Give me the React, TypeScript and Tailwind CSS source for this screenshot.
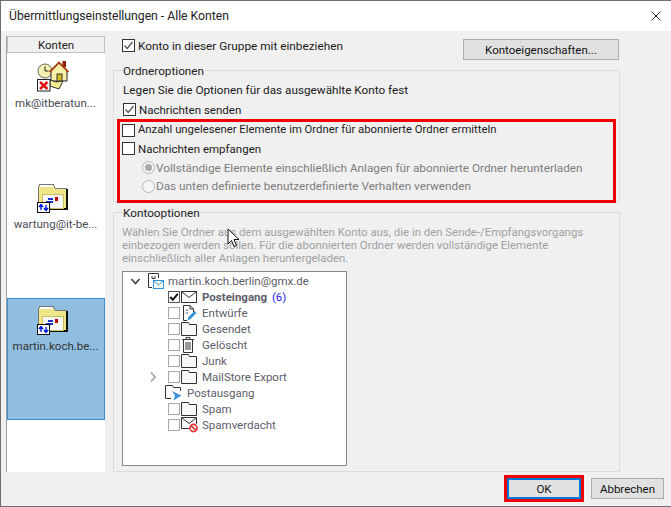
import React from "react";

const font = { fontFamily: 'Roboto, sans-serif' };

function Check({ on }: { on?: boolean }) {
  return (
    <span className="flex h-[13px] w-[13px] shrink-0 items-center justify-center border border-[#333] bg-white">
      {on && (
        <svg width="11" height="11" viewBox="0 0 11 11"><path d="M1.5 5.5 L4.2 8.5 L9.5 2" fill="none" stroke="#555" strokeWidth="1.3" /></svg>
      )}
    </span>
  );
}

function TreeCheck({ on }: { on?: boolean }) {
  return (
    <span className={`flex h-[12px] w-[12px] shrink-0 items-center justify-center border bg-white ${on ? "border-[#555]" : "border-[#a8a8a8]"}`}>
      {on && (
        <svg width="10" height="10" viewBox="0 0 10 10"><path d="M1.2 5 L3.8 7.8 L8.8 1.8" fill="none" stroke="#111" strokeWidth="2" /></svg>
      )}
    </span>
  );
}

function Row({ on, children, className = "" }: { on?: boolean; children: React.ReactNode; className?: string }) {
  return (
    <div className={`flex h-[19px] items-center gap-[3px] ${className}`}>
      <Check on={on} />
      <span>{children}</span>
    </div>
  );
}

function Radio({ on, children }: { on?: boolean; children: React.ReactNode }) {
  return (
    <div className="flex h-[18.67px] items-center gap-[1px] pl-[20px] text-[11.75px] text-[#7d7d7d]">
      <span className="flex h-[13px] w-[13px] shrink-0 items-center justify-center rounded-full border border-[#b8b8b8] bg-[#f6f6f6]">
        {on && <span className="h-[7px] w-[7px] rounded-full bg-[#a8a8a8]" />}
      </span>
      <span>{children}</span>
    </div>
  );
}

function FolderMail() {
  return (
    <svg width="31" height="30" viewBox="0 0 31 30" shapeRendering="crispEdges">
      <path d="M1 5 L3 1 H16 L18 5 H29 V26 H1 Z" fill="#efe68a" stroke="#777" />
      <path d="M3 2 H16 V4 H3 Z" fill="#fff" />
      <path d="M29 6 H31 V27 H3 V25 H29 Z" fill="#111" />
      <rect x="5" y="11" width="21" height="14" fill="#f7f7f7" stroke="#c9bf5a" />
      <rect x="18" y="14" width="3" height="4" fill="#c00000" />
      <path d="M11 16 H16 M9 19 H16" stroke="#1f33cc" strokeWidth="1.2" />
      <rect x=".5" y="19.5" width="12" height="10" fill="#fff" stroke="#111" />
      <path d="M4 27 V22 M4 21.5 L2 24 M4 21.5 L6 24 M9 22 V27 M9 27.5 L7 25 M9 27.5 L11 25" stroke="#0018e0" strokeWidth="1.4" fill="none" shapeRendering="auto" />
    </svg>
  );
}

function HomeIcon() {
  return (
    <svg width="32" height="31" viewBox="0 0 32 31">
      <circle cx="8" cy="10" r="7" fill="#f5f0b0" stroke="#666" />
      <path d="M8 5.5 V10 H11.5" stroke="#222" fill="none" />
      <rect x="25.5" y="0" width="3.5" height="6" fill="#8c1c10" />
      <path d="M14 10 L22 2 L30 10 V20 H14 Z" fill="#f8f0a8" stroke="#222" />
      <path d="M12.5 11 L22 1.5 L31.5 11" fill="none" stroke="#a8400f" strokeWidth="1.8" />
      <rect x="20" y="13" width="5" height="7" fill="#d8b820" stroke="#333" />
      <path d="M13 19 L19 21 L26 20 L22 28 L13 25 Z" fill="#f7ee90" stroke="#333" />
      <rect x=".5" y="18.5" width="12.5" height="11.5" fill="#fff" stroke="#222" />
      <path d="M3 21 L10.5 28 M10.5 21 L3 28" stroke="#e01010" strokeWidth="2.4" />
    </svg>
  );
}

function Account({ label, selected, icon, top }: { label: string; selected?: boolean; icon: React.ReactNode; top: string }) {
  return (
    <div className={`flex flex-col items-center border ${top} ${selected ? "border-[#3a8ed0] bg-[#90bee0] text-[#333]" : "border-transparent text-[#4a4a55]"}`}>
      <span className="mr-[7px] flex">{icon}</span>
      <span className="mr-[1px] mt-[3px]">{label}</span>
    </div>
  );
}

function MailIcon() {
  return (
    <svg width="16" height="12" viewBox="0 0 16 12"><rect x=".5" y=".5" width="15" height="11" fill="#fff" stroke="#333" /><path d="M1 1 L8 6.5 L15 1" fill="none" stroke="#333" /></svg>
  );
}
function FolderIcon() {
  return (
    <svg width="16" height="14" viewBox="0 0 16 14"><path d="M.5 13.5 V.5 H7.5 L8.5 2.5 H15.5 V13.5 Z" fill="#f8f8f8" stroke="#333" /></svg>
  );
}
function DraftIcon() {
  return (
    <svg width="16" height="16" viewBox="0 0 16 16"><path d="M2.5 .5 H9 L12.5 4 V7 M2.5 .5 V15.5 H6" fill="none" stroke="#333" /><path d="M9 .5 V4 H12.5" fill="none" stroke="#333" /><path d="M5 5 H7 M5 8 H7" stroke="#555" /><path d="M6.5 15.5 L7.5 12 L13.5 6 L15.5 8 L9.5 14 Z" fill="#2f8fd8" /></svg>
  );
}
function TrashIcon() {
  return (
    <svg width="14" height="16" viewBox="0 0 14 16"><path d="M1 2.5 H13 M5 2.5 V.5 H9 V2.5" fill="none" stroke="#333" /><path d="M2.5 2.5 H11.5 V15.5 H2.5 Z" fill="#fff" stroke="#333" /><path d="M5 5 V13 M7 5 V13 M9 5 V13" stroke="#333" /></svg>
  );
}
function SpamIcon() {
  return (
    <svg width="18" height="16" viewBox="0 0 18 16"><path d="M15.5 7 V.5 H.5 V11.5 H8" fill="#f8f8f8" stroke="#333" /><path d="M1 1 L8 6.5 L15 1" fill="none" stroke="#333" /><circle cx="12.5" cy="11" r="3.6" fill="#fff" stroke="#e03030" strokeWidth="1.6" /><path d="M10 8.8 L15 13.2" stroke="#e03030" strokeWidth="1.6" /></svg>
  );
}
function OutboxIcon() {
  return (
    <svg width="22" height="16" viewBox="0 0 22 16"><path d="M6 13.5 H.5 V.5 H7.5 L8.5 2.5 H15.5 V6" fill="none" stroke="#333" /><path d="M7 6 L16.5 10.5 L8.5 15.5 L10 10.5 Z" fill="#3a94d8" /></svg>
  );
}
function AccountMailIcon() {
  return (
    <svg width="16" height="16" viewBox="0 0 16 16"><path d="M4 14.5 H.5 V.5 H10.5 V5" fill="none" stroke="#333" /><path d="M4 3 V5.5 H7 V3" fill="none" stroke="#333" /><rect x="5.5" y="7.5" width="10" height="8" fill="#fff" stroke="#2f8fd8" /><path d="M6 8 L10.5 12 L15 8" fill="none" stroke="#2f8fd8" /></svg>
  );
}

function TreeRow({ icon, children, on, chevron }: { icon: React.ReactNode; children: React.ReactNode; on?: boolean; chevron?: boolean }) {
  return (
    <div className="flex h-[16px] items-center pl-[45px]">
      <span className="relative mr-[1px] flex">
        {chevron && (
          <svg className="absolute left-[-20px] top-[0px]" width="10" height="12" viewBox="0 0 10 12"><path d="M3 1.5 L7 6 L3 10.5" fill="none" stroke="#a6a6a6" strokeWidth="1.7" /></svg>
        )}
        <TreeCheck on={on} />
      </span>
      <span className="flex w-[21px] shrink-0 items-center">{icon}</span>
      <span>{children}</span>
    </div>
  );
}

function Btn({ children, className = "" }: { children: React.ReactNode; className?: string }) {
  return <div className={`flex items-center justify-center border border-[#adadad] bg-[#e1e1e1] text-[#111] ${className}`}>{children}</div>;
}

function Group({ title, children, className = "" }: { title: string; children: React.ReactNode; className?: string }) {
  return (
    <div className={`relative border border-[#dcdcdc] ${className}`}>
      <span className="absolute left-[8px] top-[-8px] bg-[#f0f0f0] px-[1px] text-[11.75px] leading-[16px] text-[#222]">{title}</span>
      {children}
    </div>
  );
}

export default function App() {
  return (
    <div style={font} className="flex h-[507px] w-[671px] flex-col overflow-hidden border border-r-0 border-[#6e6e6e] bg-[#f0f0f0] text-[11.5px] leading-[16px] text-[#1a1a1a]">
      <div className="flex h-[30px] shrink-0 items-center justify-between bg-white pl-[8px] pr-[10px] text-[12.2px] text-[#222]">
        <span>Übermittlungseinstellungen - Alle Konten</span>
        <svg width="10" height="10" viewBox="0 0 10 10"><path d="M.5 .5 L9.5 9.5 M9.5 .5 L.5 9.5" stroke="#222" strokeWidth="1" /></svg>
      </div>
      <div className="flex min-h-0 flex-1 pl-[5px] pt-[5px]">
        <div className="h-[436px] w-[99px] shrink-0 border-l border-[#a0a0a0] bg-white">
          <div className="flex h-[17px] items-center justify-center border border-[#c0c0c0] bg-[#f0f0f0] text-[#222]">Konten</div>
          <Account label="mk@itberatun..." top="h-[123px] pt-[7px]" icon={<HomeIcon />} />
          <Account label="wartung@it-be..." top="h-[122px] pt-[6px]" icon={<FolderMail />} />
          <Account label="martin.koch.be..." selected top="h-[122px] pt-[6px]" icon={<FolderMail />} />
        </div>
        <div className="ml-[8px] flex w-[507px] flex-col">
          <div className="flex h-[24px] items-start justify-between pl-[9px] pr-[1px]">
            <Row on className="text-[11.8px]">Konto in dieser Gruppe mit einbeziehen</Row>
            <Btn className="mt-[3px] h-[21px] w-[156px]">Kontoeigenschaften...</Btn>
          </div>
          <Group title="Ordneroptionen" className="mt-[10px] h-[132px] px-[3px] pt-[10px]">
            <div className="h-[19px] pl-[6px] text-[11.75px] leading-[19px]">Legen Sie die Optionen für das ausgewählte Konto fest</div>
            <Row on className="pl-[6px]">Nachrichten senden</Row>
            <div className="h-[84px] border-[3px] border-[#ee0000] pl-[2px]">
              <div className="mt-[-1px]">
                <Row className="!h-[18.67px] text-[11.3px]">Anzahl ungelesener Elemente im Ordner für abonnierte Ordner ermitteln</Row>
                <Row className="!h-[18.67px]">Nachrichten empfangen</Row>
                <Radio on>Vollständige Elemente einschließlich Anlagen für abonnierte Ordner herunterladen</Radio>
                <Radio>Das unten definierte benutzerdefinierte Verhalten verwenden</Radio>
              </div>
            </div>
          </Group>
          <Group title="Kontooptionen" className="mt-[10px] h-[260px] pl-[8px] pt-[13px]">
            <div className="relative text-[11.4px] leading-[13px] text-[#a0a0a0]">
              <div>Wählen Sie Ordner aus dem ausgewählten Konto aus, die in den Sende-/Empfangsvorgangs</div>
              <div>einbezogen werden sollen. Für die abonnierten Ordner werden vollständige Elemente</div>
              <div>einschließlich aller Anlagen heruntergeladen.</div>
              <svg className="absolute left-[105px] top-[2px]" width="13" height="20" viewBox="0 0 13 20"><path d="M1 1 V16 L4.5 12.5 L7 18.5 L9.5 17.5 L7 11.5 H12 Z" fill="#fff" stroke="#111" /></svg>
            </div>
            <div className="mt-[6px] h-[195px] w-[225px] border border-[#828790] bg-white pt-[1px] text-[#5d5d6a]">
              <div className="flex h-[16px] items-center pl-[8px]">
                <svg width="9" height="9" viewBox="0 0 9 9"><path d="M.5 2 L4.5 6.5 L8.5 2" fill="none" stroke="#444" strokeWidth="1.7" /></svg>
                <span className="ml-[8px] mr-[4px] flex w-[16px]"><AccountMailIcon /></span>
                <span>martin.koch.berlin@gmx.de</span>
              </div>
              <TreeRow on icon={<MailIcon />}><b className="font-bold">Posteingang</b> <span className="ml-[2px] text-[#2222ee]">(6)</span></TreeRow>
              <TreeRow icon={<DraftIcon />}>Entwürfe</TreeRow>
              <TreeRow icon={<FolderIcon />}>Gesendet</TreeRow>
              <TreeRow icon={<TrashIcon />}>Gelöscht</TreeRow>
              <TreeRow icon={<FolderIcon />}>Junk</TreeRow>
              <TreeRow chevron icon={<FolderIcon />}>MailStore Export</TreeRow>
              <div className="flex h-[16px] items-center pl-[42px]">
                <span className="flex w-[22px] shrink-0"><OutboxIcon /></span>
                <span>Postausgang</span>
              </div>
              <TreeRow icon={<FolderIcon />}>Spam</TreeRow>
              <TreeRow icon={<SpamIcon />}>Spamverdacht</TreeRow>
            </div>
          </Group>
        </div>
      </div>
      <div className="flex h-[34px] shrink-0 items-start justify-end gap-[7px] pr-[7px] pt-[3px]">
        <div className="border-[3px] border-[#ee0000]">
          <Btn className="h-[21px] w-[74px] !border-2 !border-[#0078d7]">OK</Btn>
        </div>
        <Btn className="mt-[3px] h-[21px] w-[73px]">Abbrechen</Btn>
      </div>
    </div>
  );
}
